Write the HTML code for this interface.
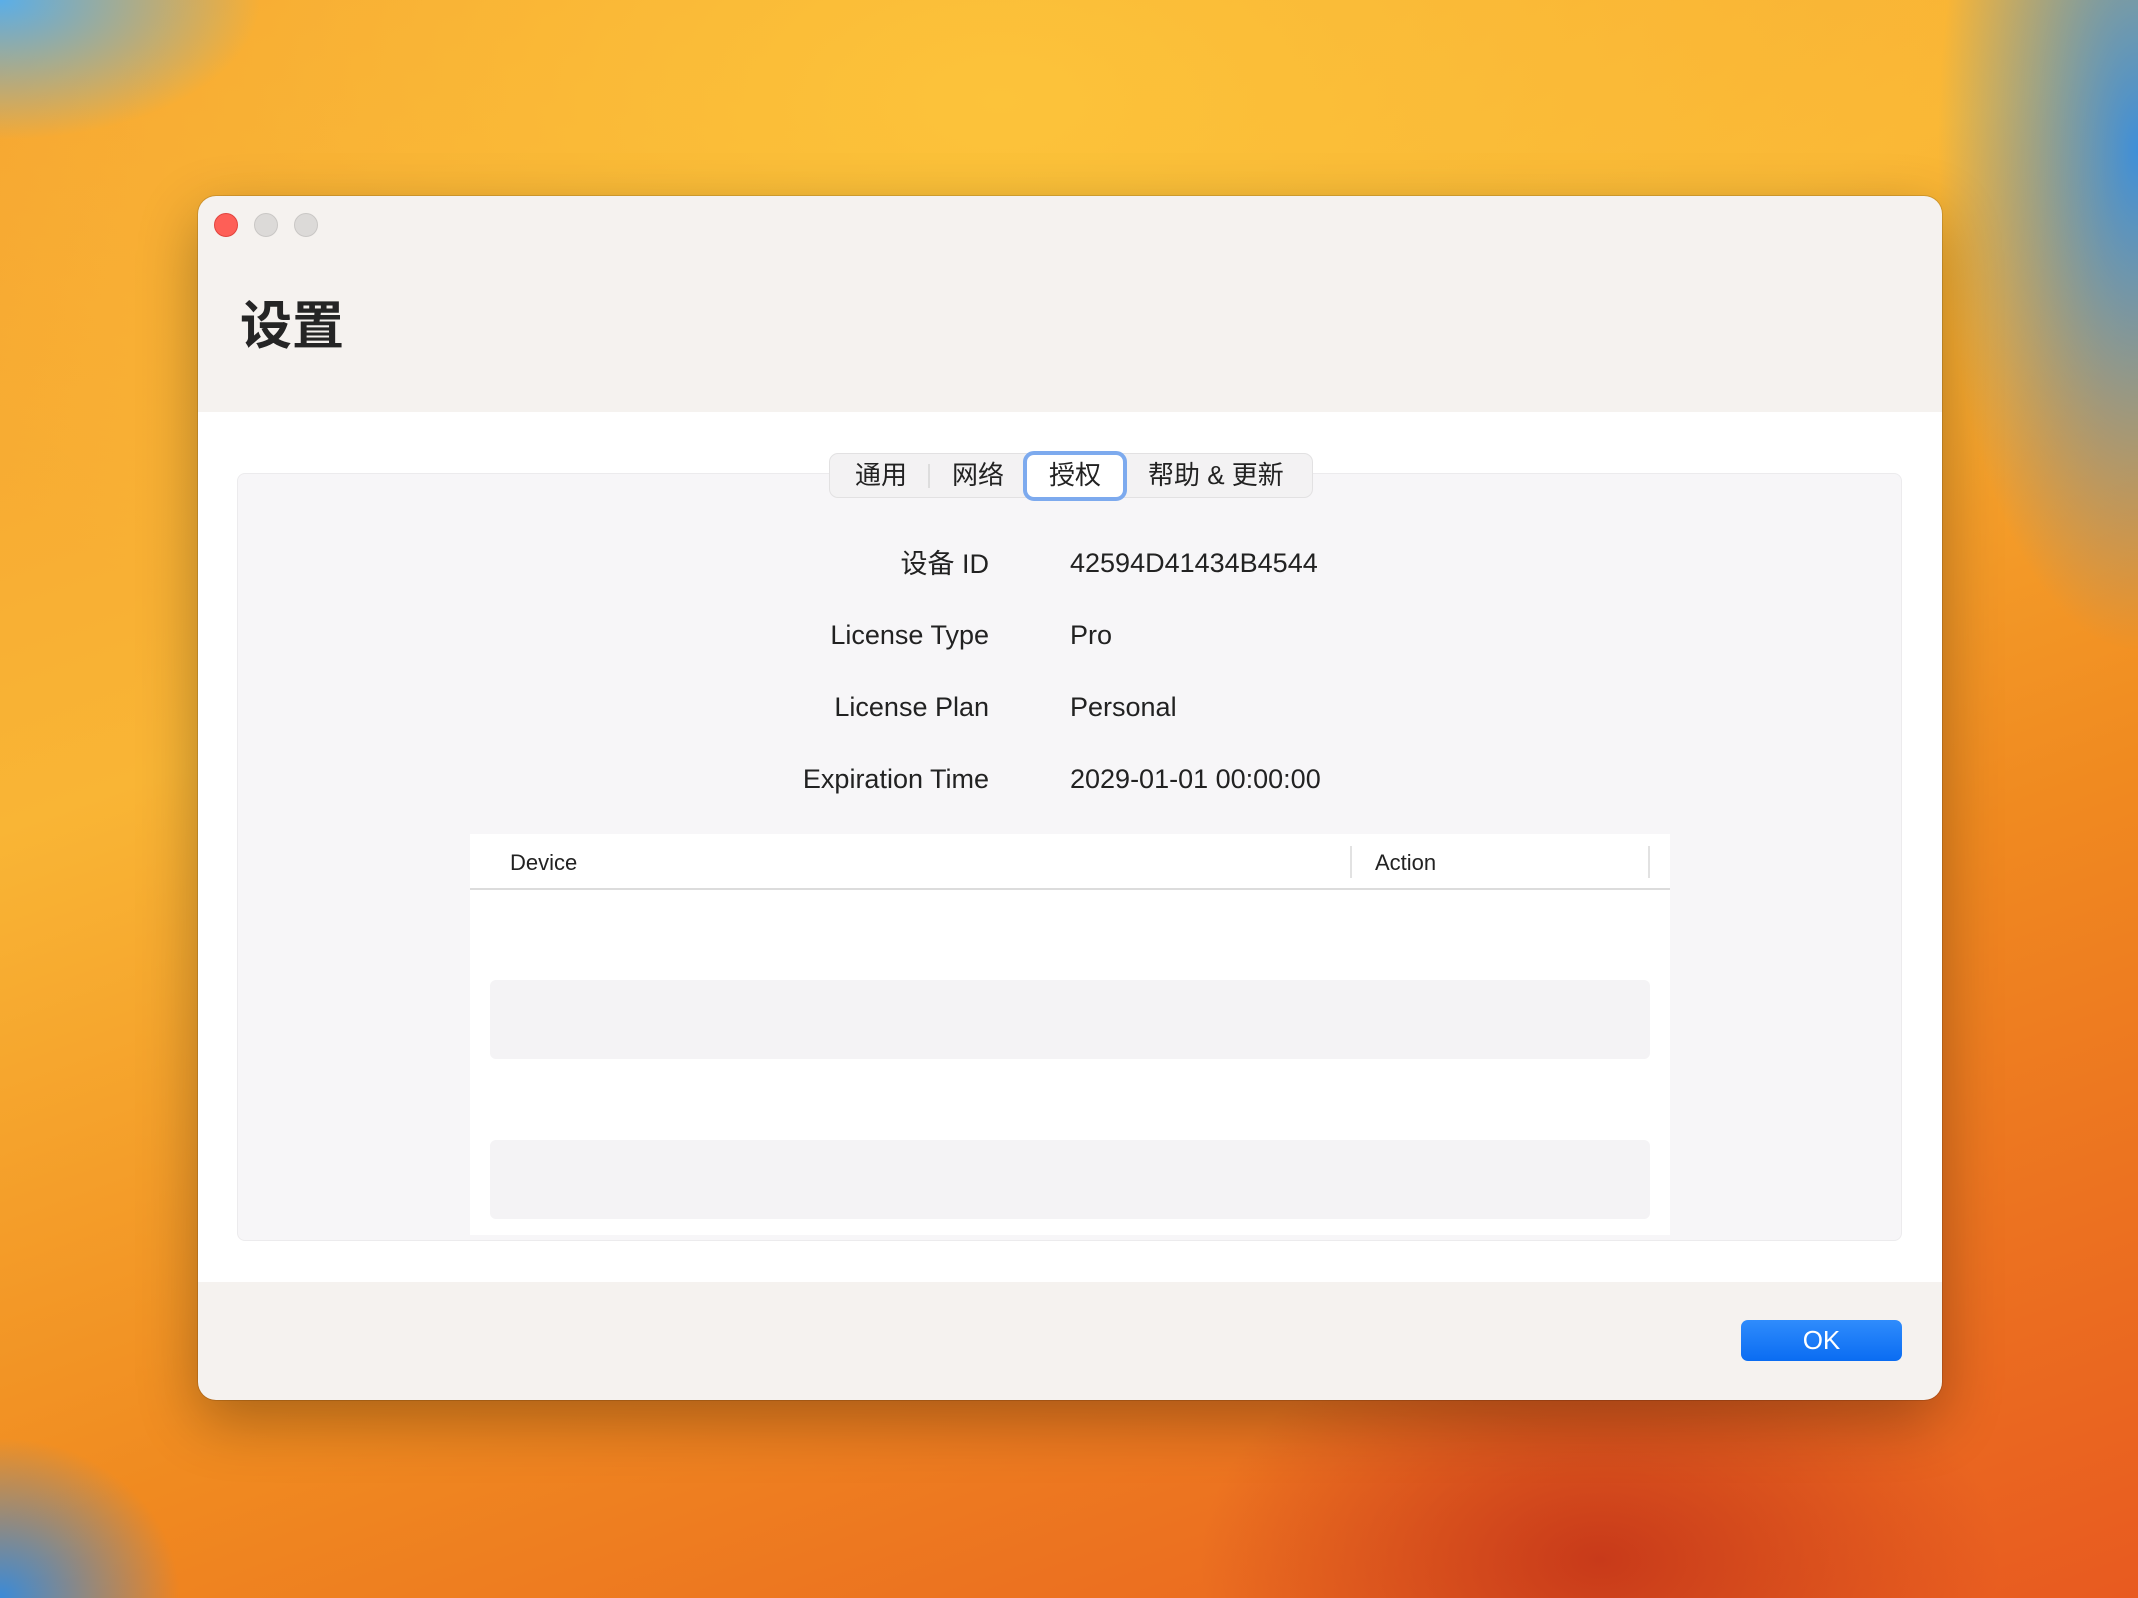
<!DOCTYPE html>
<html><head><meta charset="utf-8"><style>
*{margin:0;padding:0;box-sizing:border-box}
body{width:2138px;height:1598px;overflow:hidden;position:relative;font-family:"Liberation Sans","Noto Sans CJK SC",sans-serif;color:#222;
background:
radial-gradient(ellipse 260px 140px at 0px 0px,#5aaee8 0%,rgba(90,174,232,0) 100%),
radial-gradient(ellipse 200px 500px at 2138px 150px,#3f8fd8 0%,rgba(63,143,216,0) 100%),
radial-gradient(ellipse 180px 160px at 0px 1598px,#3a8ad8 0%,rgba(58,138,216,0) 100%),
radial-gradient(ellipse 400px 250px at 1600px 1560px,#c83a1a 0%,rgba(200,58,26,0) 100%),
radial-gradient(ellipse 1200px 700px at 1000px 100px,#fcc33a 0%,rgba(252,195,58,0) 100%),
linear-gradient(160deg,#f5a030 0%,#f9b535 35%,#f08a20 65%,#e85a20 100%);}
.win{position:absolute;left:198px;top:196px;width:1744px;height:1204px;border-radius:18px;background:#f5f2ef;overflow:hidden;box-shadow:0 20px 60px rgba(0,0,0,.3),0 0 0 1px rgba(0,0,0,.12)}
.tl{position:absolute;top:17px;width:24px;height:24px;border-radius:50%;background:#dcdad8;border:1px solid #c9c7c5}
h1{position:absolute;left:42px;top:88px;font-size:52px;font-weight:bold;color:#252525}
.content{position:absolute;left:0;top:216px;width:1744px;height:870px;background:#fff}
.panel{position:absolute;left:39px;top:61px;width:1665px;height:768px;background:#f7f6f8;border:1px solid #ecebed;border-radius:8px}
.tabs{position:absolute;left:631px;top:41px;width:484px;height:45px;background:#f3f2f3;border:1px solid #e2e1e2;border-radius:9px;font-size:26px}
.tabs span{position:absolute;top:1px}
.sel{position:absolute;left:193px;top:-3px;width:104px;height:50px;border:4px solid #7daaee;border-radius:11px;background:#fff}
.lab{position:absolute;right:953px;font-size:27px;color:#222}
.val{position:absolute;left:872px;font-size:27px;color:#222}
.table{position:absolute;left:272px;top:422px;width:1200px;height:401px;background:#fff}
.row{position:absolute;left:20px;width:1160px;height:79px;background:#f4f3f5;border-radius:6px}
.ok{position:absolute;left:1543px;top:1124px;width:161px;height:41px;border-radius:7px;background:linear-gradient(#2f8cfc,#0a6cf2);color:#fff;font-size:26px;text-align:center;line-height:41px}
</style></head><body>
<div class="win">
<div class="tl" style="left:16px;background:#fe5f57;border-color:#e0443e"></div>
<div class="tl" style="left:56px"></div>
<div class="tl" style="left:96px"></div>
<h1>设置</h1>
<div class="content">
<div class="panel"></div>
<div class="tabs">
<div class="sel"></div>
<span style="left:25px">通用</span>
<div style="position:absolute;left:98px;top:10px;width:2px;height:24px;background:#ddd"></div>
<span style="left:122px">网络</span>
<span style="left:219px">授权</span>
<span style="left:318px">帮助 &amp; 更新</span>
</div>
<div class="lab" style="top:130px">设备 ID</div><div class="val" style="top:136px">42594D41434B4544</div>
<div class="lab" style="top:208px">License Type</div><div class="val" style="top:208px">Pro</div>
<div class="lab" style="top:280px">License Plan</div><div class="val" style="top:280px">Personal</div>
<div class="lab" style="top:352px">Expiration Time</div><div class="val" style="top:352px">2029-01-01 00:00:00</div>
<div class="table">
<div style="position:absolute;left:40px;top:16px;font-size:22px">Device</div>
<div style="position:absolute;left:880px;top:12px;width:2px;height:32px;background:#e2e2e2"></div>
<div style="position:absolute;left:905px;top:16px;font-size:22px">Action</div>
<div style="position:absolute;left:1178px;top:12px;width:2px;height:32px;background:#e2e2e2"></div>
<div style="position:absolute;left:0;top:54px;width:1200px;height:2px;background:#dcdcdc"></div>
<div class="row" style="top:146px"></div>
<div class="row" style="top:306px"></div>
</div>
</div>
<div class="ok">OK</div>
</div>
</body></html>
